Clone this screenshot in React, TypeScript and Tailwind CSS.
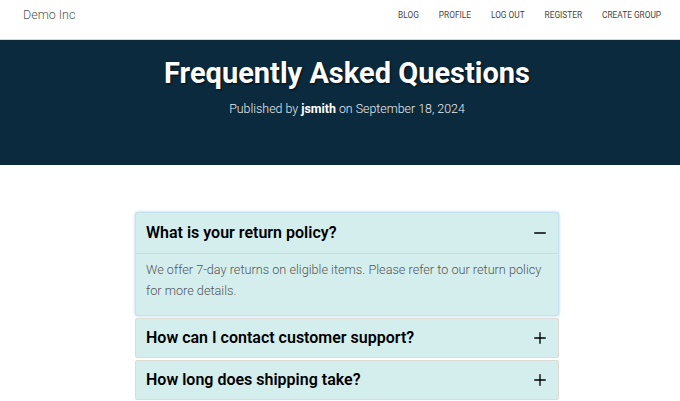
import { Minus, Plus } from "lucide-react"

const NAV = ["Blog", "Profile", "Log out", "Register", "Create group"]

const FAQS = [
  {
    q: "What is your return policy?",
    a: "We offer 7-day returns on eligible items. Please refer to our return policy for more details.",
    open: true,
  },
  { q: "How can I contact customer support?", a: "", open: false },
  { q: "How long does shipping take?", a: "", open: false },
]

export default function App() {
  return (
    <div className="min-h-[401px] bg-white" style={{ fontFamily: "Roboto, 'Noto Sans', sans-serif" }}>
      {/* Top bar */}
      <header className="flex h-[40px] items-center justify-between border-b border-[#d9d9d9] pb-[9px] pl-[23px] pr-[19px] shadow-[0_1px_2px_rgba(0,0,0,0.08)]">
        <span className="text-[12.5px] font-light text-[#555]">Demo Inc</span>
        <nav className="flex gap-[20px]">
          {NAV.map((item) => (
            <a key={item} className="text-[8.3px] uppercase text-[#444]">
              {item}
            </a>
          ))}
        </nav>
      </header>

      {/* Hero */}
      <section className="flex h-[125px] flex-col items-center bg-[#0b2a3d] pl-[14px] pt-[15px] text-white">
        <h1 className="text-[29px] font-bold leading-[36px] [text-shadow:1px_1px_2px_rgba(0,0,0,0.7)]">
          Frequently Asked Questions
        </h1>
        <p className="mt-[9px] text-[12.4px] font-light leading-[18px] text-[#e8edf0]">
          Published by <span className="font-bold text-white">jsmith</span> on September 18, 2024
        </p>
      </section>

      {/* FAQ list */}
      <div className="ml-[135px] mt-[47px] flex w-[424px] flex-col gap-[2px]">
        {FAQS.map((f) => (
          <div
            key={f.q}
            className={
              f.open
                ? "rounded-[3px] border border-[#c4e2ee] bg-[#d4eeee] shadow-[0_0_3px_rgba(120,170,230,0.6)]"
                : "rounded-[2px] border border-[#dcdcd4] bg-[#d4eeee]"
            }
          >
            <div
              className={
                f.open
                  ? "flex h-[41px] items-center justify-between border-b border-[#c9dcdc] pl-[10px] pr-[9px]"
                  : "flex h-[38px] items-center justify-between pl-[10px] pr-[9px]"
              }
            >
              <span className="text-[16px] font-semibold text-black">{f.q}</span>
              {f.open ? (
                <Minus className="h-[18px] w-[18px] text-black" strokeWidth={1.8} />
              ) : (
                <Plus className="h-[18px] w-[18px] text-black" strokeWidth={1.8} />
              )}
            </div>
            {f.open && (
              <p className="px-[10px] pb-[14px] pt-[5px] text-[12.7px] font-light leading-[21px] text-[#555]">
                {f.a}
              </p>
            )}
          </div>
        ))}
      </div>
    </div>
  )
}
